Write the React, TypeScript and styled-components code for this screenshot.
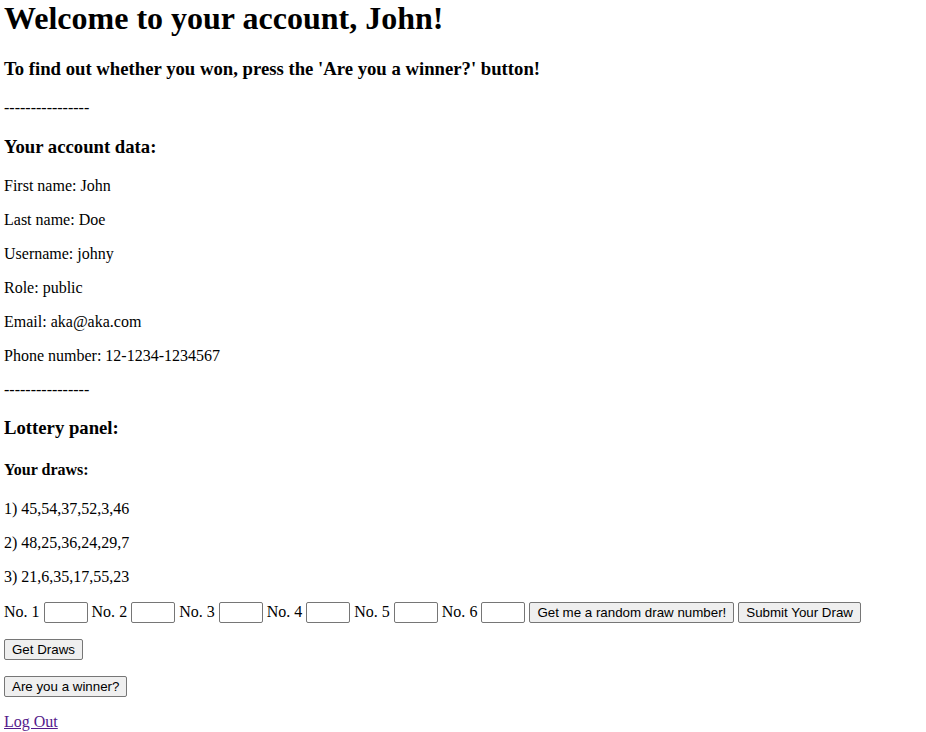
import React from 'react';
import styled, { createGlobalStyle } from "styled-components";

const draws = [
    [45, 54, 37, 52, 3, 46],
    [48, 25, 36, 24, 29, 7],
    [21, 6, 35, 17, 55, 23],
];

const account = [
    ["First name", "John"],
    ["Last name", "Doe"],
    ["Username", "johny"],
    ["Role", "public"],
    ["Email", "aka@aka.com"],
    ["Phone number", "12-1234-1234567"],
];

const App = () => {
    return (
        <>
            <GlobalStyle />
            <Page>
                <Title>Welcome to your account, John!</Title>
                <Subtitle>To find out whether you won, press the 'Are you a winner?' button!</Subtitle>
                <Text>----------------</Text>
                <Subtitle>Your account data:</Subtitle>
                {account.map(([label, value]) => (
                    <Text key={label}>{label}: {value}</Text>
                ))}
                <Text>----------------</Text>
                <Subtitle>Lottery panel:</Subtitle>
                <SmallTitle>Your draws:</SmallTitle>
                {draws.map((draw, i) => (
                    <Text key={i}>{i + 1}) {draw.join(",")}</Text>
                ))}
                <DrawForm onSubmit={(e) => e.preventDefault()}>
                    {[1, 2, 3, 4, 5, 6].map((n) => (
                        <React.Fragment key={n}>
                            No. {n} <NumberInput type="text" />{" "}
                        </React.Fragment>
                    ))}
                    <Button type="button">Get me a random draw number!</Button>{" "}
                    <Button type="submit">Submit Your Draw</Button>
                </DrawForm>
                <Text><Button type="button">Get Draws</Button></Text>
                <Text><Button type="button">Are you a winner?</Button></Text>
                <Text><LogOut href="#">Log Out</LogOut></Text>
            </Page>
        </>
    );
};

const GlobalStyle = createGlobalStyle`
    body {
        margin: 0;
        background: #ffffff;
        color: #000000;
        font-family: "Liberation Serif", "Times New Roman", serif;
        font-size: 16px;
    }
`;

const Page = styled.div`
    padding: 0 4px;
`;

const Title = styled.h1`
    font-size: 32px;
    margin: 0 0 21.44px;
`;

const Subtitle = styled.h3`
    font-size: 18.72px;
    margin: 18.72px 0;
`;

const SmallTitle = styled.h4`
    font-size: 16px;
    margin: 21.28px 0;
`;

const Text = styled.p`
    margin: 16px 0;
`;

const DrawForm = styled.form`
    margin: 0;
`;

const NumberInput = styled.input`
    box-sizing: border-box;
    width: 44px;
    height: 21px;
    padding: 1px 2px;
    border: 1px solid #767676;
    border-radius: 2px;
    font-family: "Liberation Sans", Arial, sans-serif;
    font-size: 13.33px;
    vertical-align: baseline;
`;

const Button = styled.button`
    height: 21px;
    padding: 1px 7px;
    border: 1px solid #767676;
    border-radius: 2px;
    background-color: #efefef;
    color: #000000;
    font-family: "Liberation Sans", Arial, sans-serif;
    font-size: 13.33px;
`;

const LogOut = styled.a`
    color: #551a8b;
    text-decoration: underline;
`;

export default App;
